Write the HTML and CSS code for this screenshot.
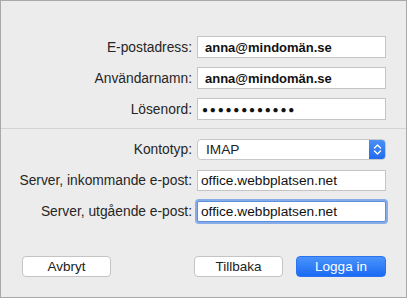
FILE: index.html
```html
<!DOCTYPE html>
<html>

<head>
  <meta charset="utf-8">
  <meta name="viewport" content="width=device-width">
  <title>Lägg till konto</title>
  <link rel="stylesheet" href="styles.css">
</head>

<body>
  <div class="sheet">
    <form class="account-form">
      <div class="fields">
        <label>E-postadress:</label>
        <div class="field strong">anna@mindomän.se</div>
        <label>Användarnamn:</label>
        <div class="field strong">anna@mindomän.se</div>
        <label>Lösenord:</label>
        <div class="field dots">●●●●●●●●●●●●</div>
      </div>
      <hr class="divider">
      <div class="fields lower">
        <label>Kontotyp:</label>
        <div class="popup">
          <span>IMAP</span>
          <span class="popup-arrows">
            <svg width="9" height="13" viewBox="0 0 9 13">
              <path d="M1.5 5 L4.5 2 L7.5 5 M1.5 8 L4.5 11 L7.5 8" fill="none" stroke="#fff" stroke-width="1.4" stroke-linecap="round" stroke-linejoin="round"/>
            </svg>
          </span>
        </div>
        <label>Server, inkommande e-post:</label>
        <div class="field">office.webbplatsen.net</div>
        <label>Server, utgående e-post:</label>
        <div class="field focused">office.webbplatsen.net</div>
      </div>
      <div class="buttons">
        <button type="button" class="btn">Avbryt</button>
        <button type="button" class="btn back">Tillbaka</button>
        <button type="button" class="btn primary">Logga in</button>
      </div>
    </form>
  </div>
</body>

</html>
```

FILE: styles.css
```css
html,
body {
  margin: 0;
  height: 100%;
  font-family: "Liberation Sans", Arial, sans-serif;
  font-size: 13px;
  color: #222;
}

.sheet {
  box-sizing: border-box;
  height: 298px;
  width: 407px;
  background: #ececec;
  border: 1px solid #a9a9a9;
}

.account-form {
  display: flex;
  flex-direction: column;
  height: 100%;
}

.fields {
  display: grid;
  grid-template-columns: 191px 189px;
  column-gap: 5px;
  row-gap: 9px;
  padding-top: 35px;
}

.fields.lower {
  padding-top: 10px;
  row-gap: 10px;
}

.fields>label {
  text-align: right;
  align-self: center;
  color: #262626;
  font-size: 13.8px;
}

.field {
  box-sizing: border-box;
  height: 22px;
  background: #fff;
  border: 1px solid #c4c4c4;
  padding: 0 6px;
  display: flex;
  align-items: center;
  color: #111;
}

.lower .field {
  height: 21px;
  padding: 0 3px;
  font-size: 13.7px;
}

.field.strong {
  font-weight: bold;
  padding-left: 7px;
}

.field.dots {
  font-size: 10px;
  letter-spacing: 1.8px;
  padding-left: 4px;
}

.field.focused {
  border-color: #5c8fdc;
  box-shadow: 0 0 0 2px #86ade9;
  border-radius: 2px;
}

.divider {
  margin: 8px 0 0;
  border: 0;
  border-top: 1px solid #d3d3d3;
}

.popup {
  box-sizing: border-box;
  height: 21px;
  display: flex;
  align-items: center;
  justify-content: space-between;
  background: #fff;
  border: 1px solid #c8c8c8;
  border-radius: 4px;
  padding-left: 8px;
  overflow: hidden;
  font-size: 13.7px;
}

.popup-arrows {
  width: 17px;
  height: 21px;
  margin-right: -1px;
  display: flex;
  align-items: center;
  justify-content: center;
  background: linear-gradient(#4d92f6, #1e68f0);
}

.buttons {
  display: flex;
  margin-top: auto;
  padding: 0 20px 20px 21px;
}

.btn {
  font-family: inherit;
  font-size: 13.5px;
  height: 21px;
  width: 89px;
  padding: 0;
  background: #fff;
  border: 1px solid #c4c4c4;
  border-radius: 4px;
  color: #222;
}

.btn.back {
  margin-left: auto;
  margin-right: 13px;
}

.btn.primary {
  width: 90px;
  border-color: #2b72f0;
  background: linear-gradient(#4a93fb, #1a6bf4);
  color: #fff;
}
```
